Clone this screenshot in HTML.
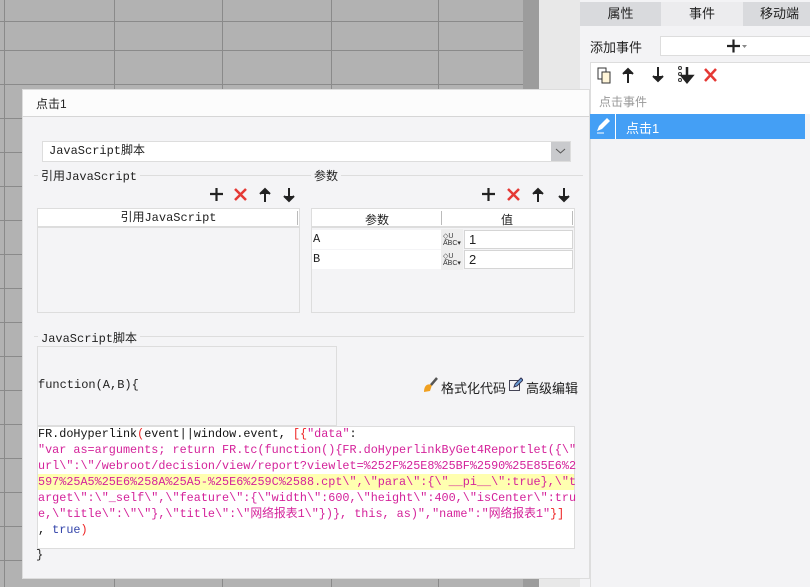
<!DOCTYPE html>
<html><head><meta charset="utf-8"><style>
*{margin:0;padding:0;box-sizing:border-box}
body{width:810px;height:587px;overflow:hidden;position:relative;background:#e8e8e8;font-family:"Liberation Sans","Noto Sans CJK SC",sans-serif;font-size:12px;color:#222}
.a{position:absolute}
.vl{position:absolute;top:0;width:1px;height:587px;background:#8a8a8a}
.hl{position:absolute;left:0;width:523px;height:1px;background:#8a8a8a}
.mono{font-family:"Liberation Mono","Noto Sans CJK SC",monospace}
.code{font-family:"Liberation Mono","Noto Sans CJK SC",monospace;font-size:11.8px;line-height:16px;color:#d4229a;white-space:pre}
.r{color:#ee2222}.k{color:#111}.b{color:#3344aa}
</style></head><body>
<div class="a" style="left:0;top:0;width:523px;height:587px;background:#b2b2b2"></div>
<div class="a" style="left:523px;top:0;width:16px;height:587px;background:#9c9c9c"></div>
<div class="vl" style="left:4px"></div><div class="vl" style="left:114px"></div><div class="vl" style="left:222px"></div><div class="vl" style="left:331px"></div><div class="vl" style="left:438px"></div>
<div class="hl" style="top:21px"></div><div class="hl" style="top:50px"></div><div class="hl" style="top:84px"></div>
<div class="hl" style="top:118px"></div><div class="hl" style="top:152px"></div><div class="hl" style="top:186px"></div><div class="hl" style="top:220px"></div><div class="hl" style="top:254px"></div><div class="hl" style="top:288px"></div><div class="hl" style="top:322px"></div><div class="hl" style="top:356px"></div><div class="hl" style="top:390px"></div><div class="hl" style="top:424px"></div><div class="hl" style="top:458px"></div><div class="hl" style="top:492px"></div><div class="hl" style="top:526px"></div><div class="hl" style="top:560px"></div>

<div class="a" style="left:580px;top:0;width:230px;height:587px;background:#f3f3f5"></div>
<div class="a" style="left:580px;top:2px;width:81px;height:24px;background:#d9dadd;text-align:center;line-height:24px;font-size:13px">属性</div>
<div class="a" style="left:661px;top:2px;width:82px;height:24px;background:#ececee;text-align:center;line-height:24px;font-size:13px">事件</div>
<div class="a" style="left:743px;top:2px;width:67px;height:24px;background:#d9dadd;text-align:center;line-height:24px;font-size:13px;padding-left:6px">移动端</div>
<div class="a" style="left:590px;top:37px;font-size:13px">添加事件</div>
<div class="a" style="left:660px;top:36px;width:152px;height:20px;background:#fff;border:1px solid #ddd"></div>
<svg class="a" style="left:725px;top:38px" width="26" height="16"><path d="M2 8h13M8.5 1.5v13" stroke="#222" stroke-width="2.2"/><path d="M17 7h5l-2.5 3z" fill="#888"/></svg>
<div class="a" style="left:590px;top:62px;width:222px;height:27px;background:#fff;border:1px solid #ddd"></div>
<svg class="a" style="left:596px;top:65px" width="125" height="20">
<rect x="2" y="3" width="8" height="11" fill="#fff" stroke="#333"/><rect x="6" y="7" width="8" height="11" fill="#fff5d8" stroke="#333"/>
<path d="M32 18V5M27 9l5-5 5 5" stroke="#222" stroke-width="2" fill="#222"/>
<path d="M62 2v13M57 11l5 5 5-5" stroke="#222" stroke-width="2" fill="#222"/>
<circle cx="84" cy="3" r="1.5" fill="none" stroke="#333"/><circle cx="84" cy="9" r="1.5" fill="none" stroke="#333"/><circle cx="84" cy="15" r="1.5" fill="none" stroke="#333"/>
<path d="M91 2v13M86 11l5 6 5-6z" stroke="#222" stroke-width="2.5" fill="#222"/>
<path d="M109 4l11 12M120 4l-11 12" stroke="#e53935" stroke-width="2.5"/>
</svg>
<div class="a" style="left:590px;top:88px;width:222px;height:26px;background:#fff;border-left:1px solid #ddd"></div>
<div class="a" style="left:599px;top:93px;color:#999;font-size:12px">点击事件</div>
<div class="a" style="left:590px;top:114px;width:215px;height:25px;background:#449ff5"></div>
<div class="a" style="left:615px;top:114px;width:1px;height:25px;background:#fff"></div>
<svg class="a" style="left:594px;top:117px" width="18" height="18"><path d="M3 14l2-5 8-8 3 3-8 8z" fill="#fff"/><path d="M3 16h7" stroke="#fff"/></svg>
<div class="a" style="left:626px;top:118px;color:#fff;font-size:13px">点击1</div>
<div class="a" style="left:590px;top:139px;width:1px;height:448px;background:#ddd"></div>

<div class="a" style="left:22px;top:89px;width:568px;height:490px;background:#f4f4f6;border:1px solid #ddd"></div>
<div class="a" style="left:22px;top:89px;width:568px;height:28px;background:#fcfcfc;border:1px solid #ddd;border-bottom-color:#d6d6d6"></div>
<div class="a" style="left:36px;top:95px;font-size:12px">点击1</div>

<div class="a mono" style="left:42px;top:141px;width:529px;height:21px;background:#fff;border:1px solid #ddd;line-height:19px;padding-left:6px;font-size:12px">JavaScript脚本</div>
<div class="a" style="left:551px;top:142px;width:19px;height:19px;background:#c9cacd"></div>
<svg class="a" style="left:555px;top:147px" width="11" height="8"><path d="M1 2l4.5 4 4.5-4" stroke="#555" fill="none"/></svg>

<div class="a" style="left:34px;top:175px;width:264px;height:1px;background:#ddd"></div>
<div class="a mono" style="left:38px;top:167px;padding:0 3px;background:#f4f4f6;font-size:12px">引用JavaScript</div>
<div class="a" style="left:289px;top:175px;width:294px;height:1px;background:#ddd"></div>
<div class="a" style="left:311px;top:167px;padding:0 3px;background:#f4f4f6;font-size:12px">参数</div>

<svg class="a" style="left:205px;top:186px" width="95" height="18"><path d="M5 8h13M11.5 2v13" stroke="#222" stroke-width="2.2"/><path d="M30 3l11 11M41 3l-11 11" stroke="#e53935" stroke-width="2.5"/><path d="M60 16V4M55 8l5-5 5 5" stroke="#222" stroke-width="2" fill="#222"/><path d="M84 2v12M79 10l5 5 5-5" stroke="#222" stroke-width="2" fill="#222"/></svg>
<svg class="a" style="left:480px;top:186px" width="95" height="18"><path d="M2 8h13M8.5 2v13" stroke="#222" stroke-width="2.2"/><path d="M28 3l11 11M39 3l-11 11" stroke="#e53935" stroke-width="2.5"/><path d="M58 16V4M53 8l5-5 5 5" stroke="#222" stroke-width="2" fill="#222"/><path d="M84 2v12M79 10l5 5 5-5" stroke="#222" stroke-width="2" fill="#222"/></svg>

<div class="a" style="left:37px;top:208px;width:263px;height:105px;border:1px solid #ddd;background:#f4f4f6"></div>
<div class="a mono" style="left:38px;top:209px;width:261px;height:19px;background:#fff;text-align:center;line-height:19px;border-bottom:2px solid #ddd">引用JavaScript</div>
<div class="a" style="left:297px;top:211px;width:1px;height:14px;background:#bbb"></div>

<div class="a" style="left:311px;top:208px;width:264px;height:105px;border:1px solid #ddd;background:#f4f4f6"></div>
<div class="a" style="left:312px;top:209px;width:262px;height:19px;background:#fff;border-bottom:2px solid #ddd"></div>
<div class="a" style="left:312px;top:211px;width:130px;text-align:center">参数</div>
<div class="a" style="left:442px;top:211px;width:130px;text-align:center">值</div>
<div class="a" style="left:441px;top:211px;width:1px;height:14px;background:#bbb"></div>
<div class="a" style="left:572px;top:211px;width:1px;height:14px;background:#bbb"></div>
<div class="a mono" style="left:312px;top:230px;width:129px;height:19px;background:#fff;line-height:19px;padding-left:1px">A</div>
<div class="a mono" style="left:312px;top:250px;width:129px;height:19px;background:#fff;line-height:19px;padding-left:1px">B</div>
<div class="a" style="left:441px;top:229px;width:22px;height:41px;background:#eee"></div>
<div class="a" style="left:443px;top:233px;font-size:7px;line-height:7px;color:#333">◇̲U<br>ABC▾</div>
<div class="a" style="left:443px;top:253px;font-size:7px;line-height:7px;color:#333">◇̲U<br>ABC▾</div>
<div class="a" style="left:464px;top:230px;width:109px;height:19px;background:#fff;border:1px solid #d5d5d5;line-height:17px;padding-left:4px;font-size:13px">1</div>
<div class="a" style="left:464px;top:250px;width:109px;height:19px;background:#fff;border:1px solid #d5d5d5;line-height:17px;padding-left:4px;font-size:13px">2</div>

<div class="a" style="left:34px;top:336px;width:550px;height:1px;background:#ddd"></div>
<div class="a mono" style="left:38px;top:329px;padding:0 3px;background:#f4f4f6;font-size:12px">JavaScript脚本</div>
<div class="a" style="left:37px;top:346px;width:300px;height:80px;border:1px solid #ddd;background:#f4f4f6"></div>
<div class="a mono" style="left:38px;top:378px;font-size:12px">function(A,B){</div>
<svg class="a" style="left:421px;top:376px" width="18" height="18"><path d="M3 16c0-6 3-9 8-7l-2 6z" fill="#f0a020"/><path d="M10 9l6-7" stroke="#555" stroke-width="2.5"/></svg>
<div class="a" style="left:441px;top:378px;font-size:13px">格式化代码</div>
<svg class="a" style="left:508px;top:377px" width="15" height="15"><rect x="1.5" y="3.5" width="10" height="10" fill="none" stroke="#445"/><path d="M6 10l1-3 6-6 2 2-6 6z" fill="#6aa0d8" stroke="#335"/></svg>
<div class="a" style="left:526px;top:378px;font-size:13px">高级编辑</div>

<div class="a" style="left:37px;top:426px;width:538px;height:123px;background:#fff;border:1px solid #ddd"></div>
<div class="a" style="left:38px;top:474px;width:536px;height:16px;background:#ffffb0"></div>
<div class="a code" style="left:38px;top:426px"><span class="k">FR.doHyperlink</span><span class="r">(</span><span class="k">event||window.event, </span><span class="r">[{</span>"data"<span class="k">:</span>
"var as=arguments; return FR.tc(function(){FR.doHyperlinkByGet4Reportlet({\"
url\":\"/webroot/decision/view/report?viewlet=%252F%25E8%25BF%2590%25E85E6%2
597%25A5%25E6%258A%25A5-%25E6%259C%2588.cpt\",\"para\":{\"__pi__\":true},\"t
arget\":\"_self\",\"feature\":{\"width\":600,\"height\":400,\"isCenter\":tru
e,\"title\":\"\"},\"title\":\"网络报表1\"})}, this, as)","name":"网络报表1"<span class="r">}]</span>
<span class="k">, </span><span class="b">true</span><span class="r">)</span></div>
<div class="a mono" style="left:36px;top:548px;font-size:12px">}</div>
</body></html>
